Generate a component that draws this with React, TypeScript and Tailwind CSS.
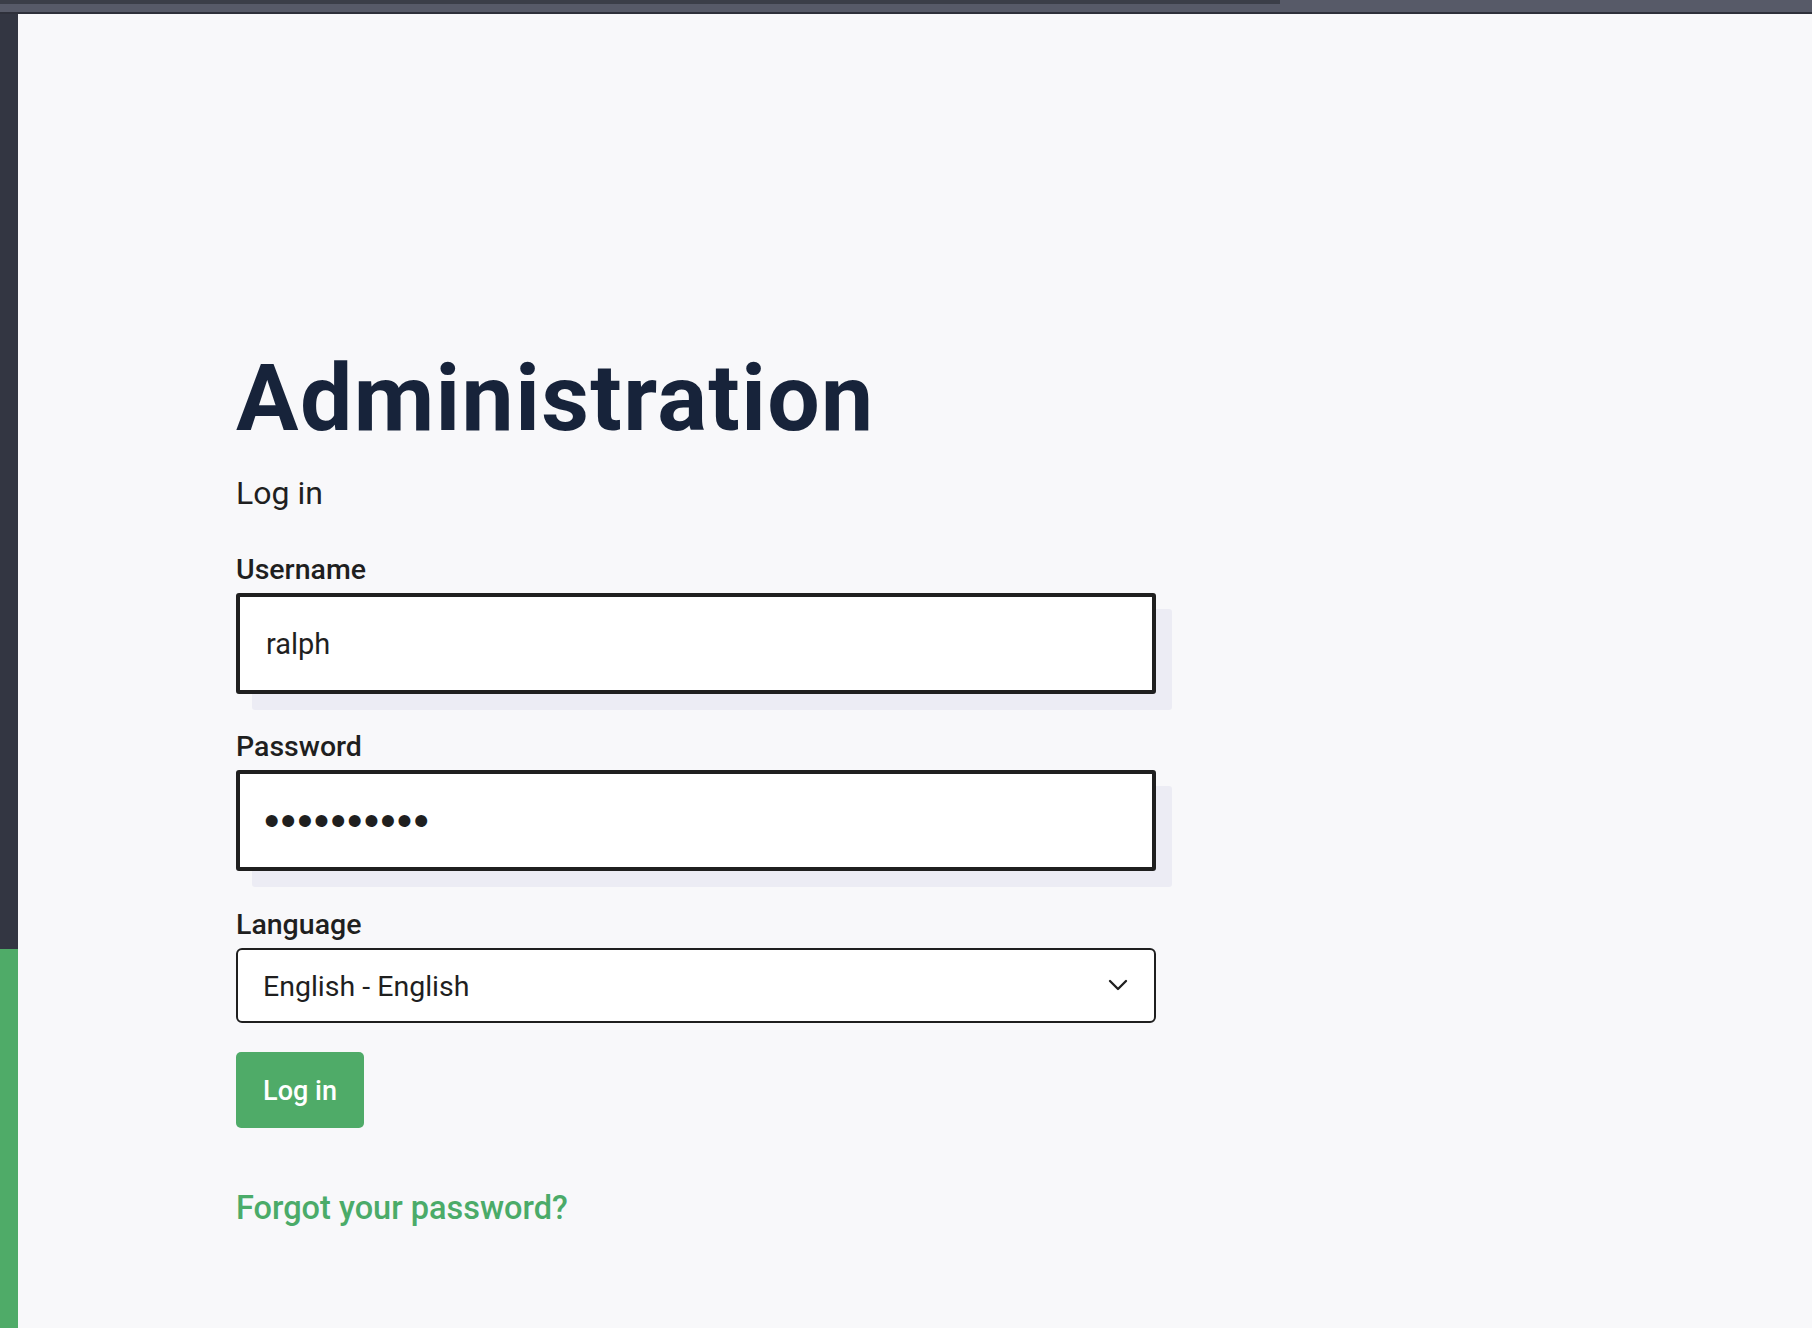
import React, { useState } from 'react';
import { ChevronDown } from 'lucide-react';

const font = { fontFamily: 'Roboto, "Noto Sans", sans-serif' };

const App: React.FC = () => {
  const [username, setUsername] = useState('ralph');
  const [password, setPassword] = useState('••••••••••');
  const [language, setLanguage] = useState('en');

  return (
    <div className="flex h-screen flex-col overflow-hidden bg-[#f8f8fa]" style={font}>
      {/* Top chrome */}
      <div className="flex flex-col">
        <div className="flex h-[4px]">
          <div className="w-[1280px] bg-[#3b3e48]" />
          <div className="flex-1 bg-[#575a68]" />
        </div>
        <div className="h-[8px] bg-[#575a68]" />
        <div className="h-[2px] bg-[#2e303a]" />
      </div>

      <div className="flex flex-1">
        {/* Side rail */}
        <div className="flex w-[18px] flex-col">
          <div className="h-[935px] bg-[#333642]" />
          <div className="flex-1 bg-[#4fab68]" />
        </div>

        {/* Login form */}
        <main className="flex-1 pl-[218px] pt-[338px]">
          <h1 className="text-[93px] font-bold leading-none tracking-[1.4px] text-[#17233a]">
            Administration
          </h1>
          <p className="mt-[28px] text-[32px] leading-[40px] text-[#1f1f1f]">Log in</p>

          <form className="mt-[39px] flex w-[920px] flex-col" onSubmit={(e) => e.preventDefault()}>
            <label htmlFor="username" className="text-[28.5px] font-medium leading-[36px] text-[#1f1f1f]">
              Username
            </label>
            <input
              id="username"
              type="text"
              value={username}
              onChange={(e) => setUsername(e.target.value)}
              className="mt-[5px] h-[101px] w-full rounded-[3px] border-4 border-[#1f1f1f] bg-white px-[26px] text-[29px] text-[#1f1f1f] shadow-[16px_16px_0_#ececf4] outline-none"
            />

            <label htmlFor="password" className="mt-[35px] text-[28.5px] font-medium leading-[36px] text-[#1f1f1f]">
              Password
            </label>
            <input
              id="password"
              type="password"
              value={password}
              onChange={(e) => setPassword(e.target.value)}
              className="mt-[5px] h-[101px] w-full rounded-[3px] border-4 border-[#1f1f1f] bg-white px-[24px] text-[44px] tracking-[1.2px] text-[#1f1f1f] shadow-[16px_16px_0_#ececf4] outline-none"
              style={{ fontFamily: '"Liberation Sans", sans-serif' }}
            />

            <label htmlFor="language" className="mt-[36px] text-[28.5px] font-medium leading-[36px] text-[#1f1f1f]">
              Language
            </label>
            <div className="relative mt-[5px]">
              <select
                id="language"
                value={language}
                onChange={(e) => setLanguage(e.target.value)}
                className="h-[75px] w-full appearance-none rounded-[6px] border-2 border-[#1f1f1f] bg-white pl-[25px] pt-[3px] text-[28.5px] text-[#1f1f1f] outline-none"
              >
                <option value="en">English - English</option>
                <option value="fr">Français - French</option>
                <option value="de">Deutsch - German</option>
              </select>
              <ChevronDown
                className="pointer-events-none absolute right-[22px] top-[21px] text-[#1f1f1f]"
                size={32}
                strokeWidth={1.75}
              />
            </div>

            <div className="mt-[29px]">
              <button
                type="submit"
                className="h-[76px] w-[128px] rounded-[5px] bg-[#4fab68] pt-[3px] text-[27px] font-medium text-white"
              >
                Log in
              </button>
            </div>
          </form>

          <a href="#" className="mt-[60px] inline-block text-[32.5px] font-medium leading-[40px] text-[#4bab69]">
            Forgot your password?
          </a>
        </main>
      </div>
    </div>
  );
};

export default App;
